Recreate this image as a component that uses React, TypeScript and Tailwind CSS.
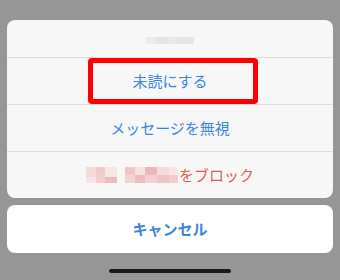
import React from "react";

const font = { fontFamily: '"Noto Sans CJK JP", "Noto Sans", sans-serif' };

function Pixel({ w, h, c }: { w: string; h: string; c: string }) {
    return <span className={`inline-block ${w} ${h} ${c}`} />;
}

export default function App() {
    return (
        <div
            className="w-[340px] h-[280px] bg-[#969696] px-[7px] pt-[20px] flex flex-col overflow-hidden"
            style={font}
        >
            <div className="relative rounded-[8px] bg-[#f7f7f7] flex flex-col">
                {/* title (redacted) */}
                <div className="h-[37px] flex items-center justify-center pt-[3px]">
                    <div className="flex items-center opacity-90">
                        <Pixel w="w-[10px]" h="h-[7px]" c="bg-[#ebebeb]" />
                        <Pixel w="w-[12px]" h="h-[7px]" c="bg-[#e2e2e2]" />
                        <Pixel w="w-[8px]" h="h-[7px]" c="bg-[#e8e8e8]" />
                        <Pixel w="w-[18px]" h="h-[7px]" c="bg-[#e4e4e4]" />
                    </div>
                </div>

                <div className="h-[47px] border-t border-[#dedede] flex items-center justify-center text-[15px] text-[#3d84de]">
                    未読にする
                </div>
                <div className="h-[47px] border-t border-[#dedede] flex items-center justify-center text-[15px] text-[#3d84de]">
                    メッセージを無視
                </div>
                <div className="h-[47px] border-t border-[#dedede] flex items-center justify-center text-[15px] text-[#df5a55]">
                    <span className="flex items-end h-[16px] mr-[1px]">
                        <span className="flex flex-col">
                            <Pixel w="w-[10px]" h="h-[10px]" c="bg-[#f5dada]" />
                            <Pixel w="w-[10px]" h="h-[6px]" c="bg-[#f8e4e4]" />
                        </span>
                        <span className="flex flex-col">
                            <Pixel w="w-[9px]" h="h-[6px]" c="bg-[#f0c8c8]" />
                            <Pixel w="w-[9px]" h="h-[10px]" c="bg-[#f1cdcd]" />
                        </span>
                        <span className="flex flex-col">
                            <Pixel w="w-[12px]" h="h-[10px]" c="bg-[#f7e6e6]" />
                            <Pixel w="w-[12px]" h="h-[6px]" c="bg-[#ecbcbc]" />
                        </span>
                        <span className="inline-block w-[8px]" />
                        <span className="flex flex-col">
                            <Pixel w="w-[10px]" h="h-[8px]" c="bg-[#efc6c6]" />
                            <Pixel w="w-[10px]" h="h-[8px]" c="bg-[#f3d3d3]" />
                        </span>
                        <span className="flex flex-col">
                            <Pixel w="w-[10px]" h="h-[8px]" c="bg-[#f7e2e2]" />
                            <Pixel w="w-[10px]" h="h-[8px]" c="bg-[#ecbdbd]" />
                        </span>
                        <span className="flex flex-col">
                            <Pixel w="w-[12px]" h="h-[8px]" c="bg-[#eab8b8]" />
                            <Pixel w="w-[12px]" h="h-[8px]" c="bg-[#f2d0d0]" />
                        </span>
                        <span className="flex flex-col">
                            <Pixel w="w-[12px]" h="h-[8px]" c="bg-[#f5dcdc]" />
                            <Pixel w="w-[12px]" h="h-[8px]" c="bg-[#efc4c4]" />
                        </span>
                        <span className="flex flex-col">
                            <Pixel w="w-[9px]" h="h-[8px]" c="bg-[#f8e6e6]" />
                            <Pixel w="w-[9px]" h="h-[8px]" c="bg-[#f2cdcd]" />
                        </span>
                    </span>
                    をブロック
                </div>

                {/* highlight */}
                <div className="absolute left-[81px] top-[38px] w-[170px] h-[46px] border-[5px] border-[#ff0000] rounded-[4px]" />
            </div>

            <div className="mt-[7px] h-[48px] rounded-[8px] bg-white flex items-center justify-center text-[15px] font-bold text-[#3d84de]">
                キャンセル
            </div>

            <div className="mt-[16px] mx-auto w-[122px] h-[4px] rounded-full bg-[#1a1a1a]" />
        </div>
    );
}
